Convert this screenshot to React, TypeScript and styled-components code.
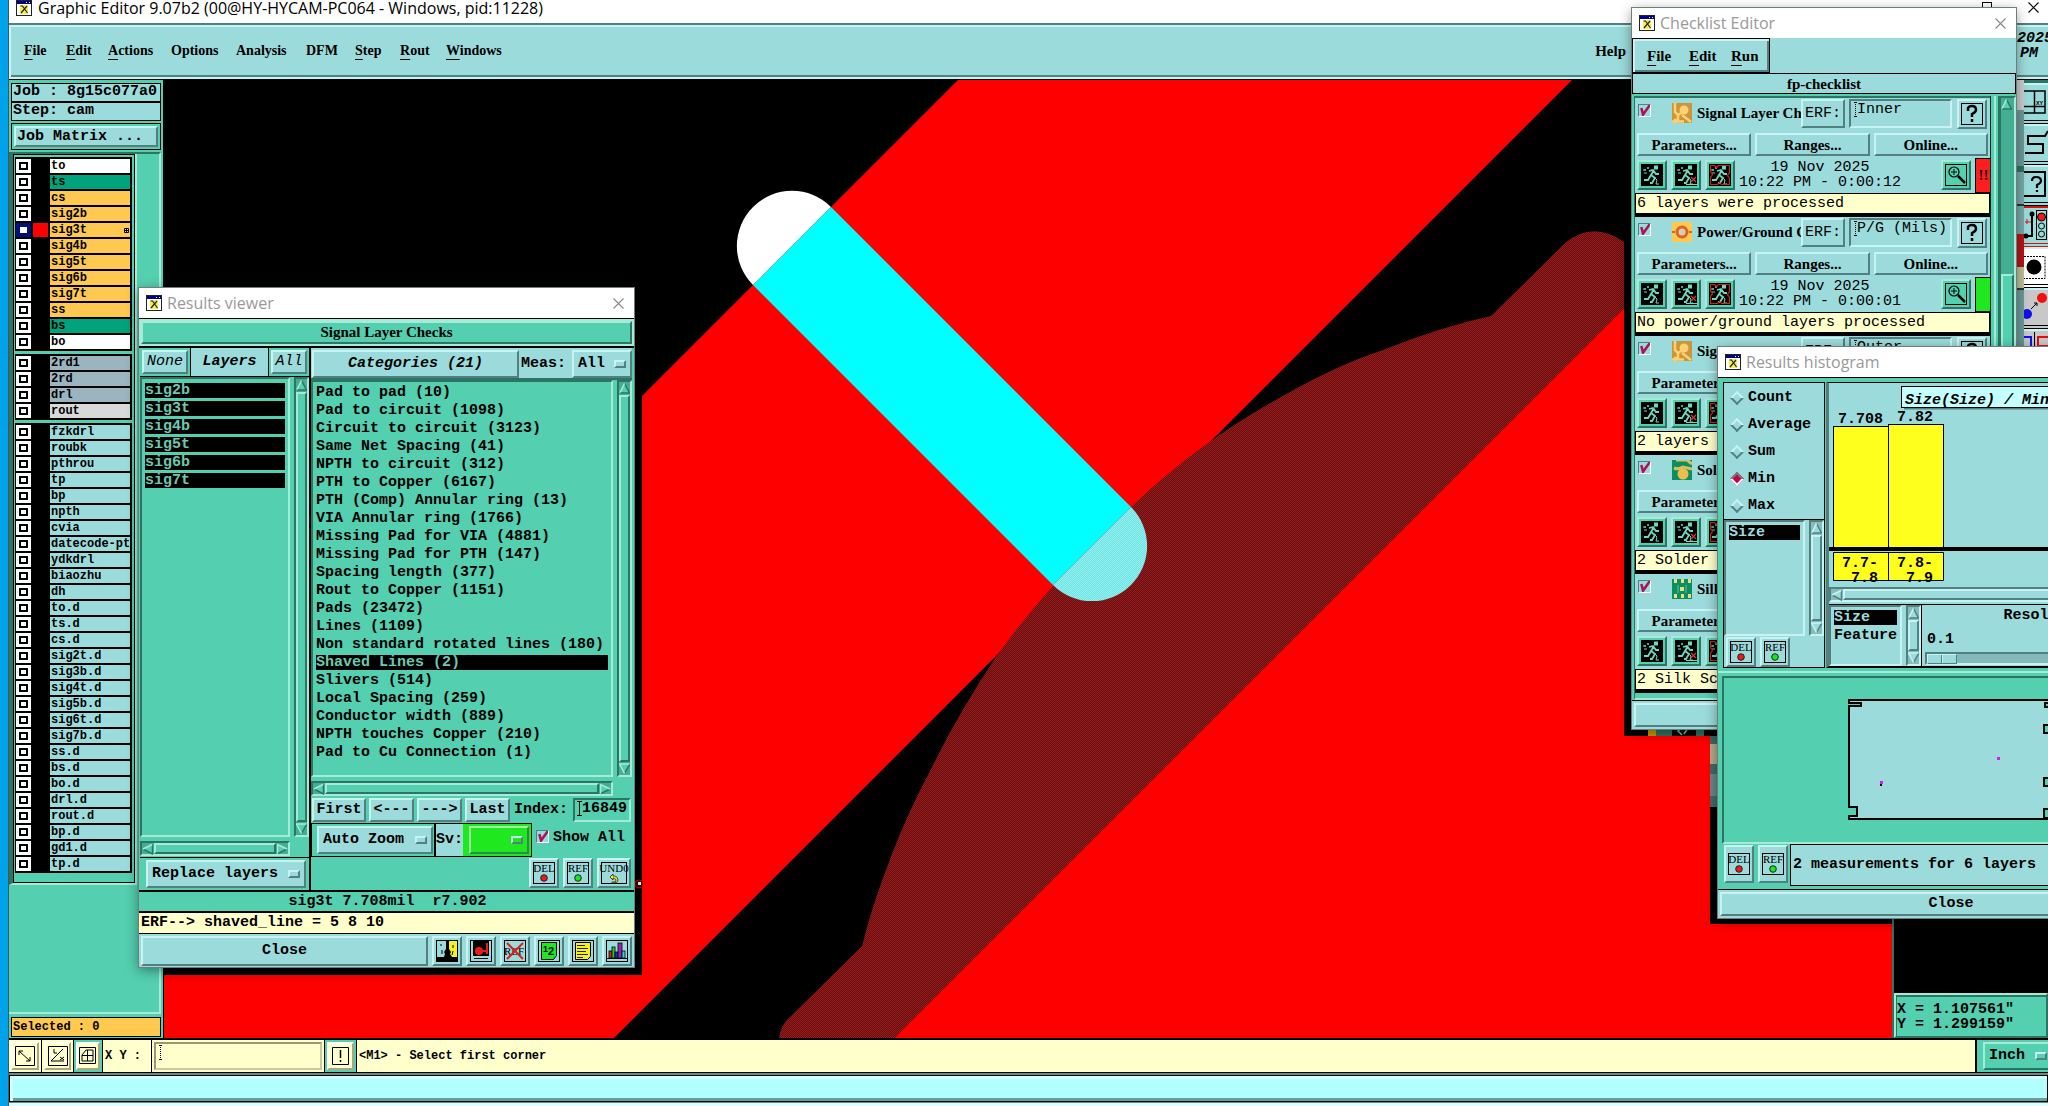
import React from "react";
import styled, { createGlobalStyle, css } from "styled-components";

const C = {
  blue: "#9cdbdb",
  blueHi: "#c8f3f3",
  blueLo: "#527f80",
  green: "#54cfb0",
  greenHi: "#a4ebd8",
  greenLo: "#2c7563",
  cream: "#ffffcc",
  ink: "#000000",
};

const mono = `"Liberation Mono", "DejaVu Sans Mono", monospace`;
const serif = `"Liberation Serif", "DejaVu Serif", serif`;
const ui = `"Open Sans", "Noto Sans", sans-serif`;

const Global = createGlobalStyle`
  *, *::before, *::after { box-sizing: border-box; }
  html, body, #root { height: 100%; }
  body { margin: 0; overflow: hidden; font: bold 15px/18px ${mono}; color: ${C.ink}; }
  button, input, select { font: inherit; color: inherit; margin: 0; padding: 0; border-radius: 0; }
  ul { list-style: none; margin: 0; padding: 0; }
  svg { display: block; flex: none; }
`;

const raisedBlue = css`
  border: 2px solid;
  border-color: ${C.blueHi} ${C.blueLo} ${C.blueLo} ${C.blueHi};
  background: ${C.blue};
`;
const raisedGreen = css`
  border: 2px solid;
  border-color: ${C.greenHi} ${C.greenLo} ${C.greenLo} ${C.greenHi};
  background: ${C.green};
`;
const sunkenGreen = css`
  border: 2px solid;
  border-color: ${C.greenLo} ${C.greenHi} ${C.greenHi} ${C.greenLo};
`;
const sunkenBlue = css`
  border: 2px solid;
  border-color: ${C.blueLo} ${C.blueHi} ${C.blueHi} ${C.blueLo};
`;
/* the I-shaped insertion mark at the start of a text field */
const caret = css`
  background-image: linear-gradient(#000, #000), linear-gradient(#000, #000), linear-gradient(#000, #000);
  background-repeat: no-repeat;
  background-position: 4px 1px, 2px 1px, 2px 15px;
  background-size: 1px 15px, 5px 1px, 5px 1px;
`;
const dottedCaret = css`
  background-image: repeating-linear-gradient(#000 0 1px, transparent 1px 2px), linear-gradient(90deg, #000 0 1px, transparent 1px 2px, #000 2px 3px), linear-gradient(90deg, #000 0 1px, transparent 1px 2px, #000 2px 3px);
  background-repeat: no-repeat;
  background-position: 4px 1px, 3px 1px, 3px 15px;
  background-size: 1px 15px, 3px 1px, 3px 1px;
`;

/* ---------- shared parts ---------- */

const Desktop = styled.div`
  position: relative;
  height: 100%;
  overflow: hidden;
  padding-left: 8px;
  background: #00a2ea;
`;

const Btn = styled.button<{ $w?: number; $italic?: boolean; $thin?: boolean; $grow?: boolean }>`
  ${raisedBlue}
  display: flex;
  align-items: center;
  justify-content: center;
  white-space: nowrap;
  overflow: hidden;
  ${(p) => (p.$grow ? "flex: 1;" : "flex: none;")}
  ${(p) => p.$w && `width: ${p.$w}px;`}
  font-style: ${(p) => (p.$italic ? "italic" : "normal")};
  font-weight: ${(p) => (p.$thin ? "normal" : "bold")};
`;

const SelectBox = styled.div<{ $tone?: "blue" | "green" | "lime"; $w: number }>`
  position: relative;
  flex: none;
  width: ${(p) => p.$w}px;
  height: 28px;
  select {
    appearance: none;
    width: 100%;
    height: 100%;
    padding-left: 4px;
    outline: none;
    ${(p) => (p.$tone === "green" ? raisedGreen : raisedBlue)}
    ${(p) => p.$tone === "lime" && "background: #1fe81f; border-color: #a4f5a4 #2a8a50 #2a8a50 #a4f5a4;"}
  }
  &::after {
    content: "";
    position: absolute;
    right: 6px;
    top: 10px;
    width: 12px;
    height: 8px;
    border: 2px solid;
    border-color: ${C.blueHi} ${C.blueLo} ${C.blueLo} ${C.blueHi};
    pointer-events: none;
  }
`;

function Option(p: { label: string; value: string; w: number; tone?: "blue" | "green" | "lime" }) {
  return (
    <SelectBox $w={p.w} $tone={p.tone}>
      <select aria-label={p.label} defaultValue={p.value}>
        <option value={p.value}>{p.value}</option>
      </select>
    </SelectBox>
  );
}

const Bar = styled.div<{ $h?: boolean; $tone: string }>`
  display: flex;
  flex-direction: ${(p) => (p.$h ? "row" : "column")};
  ${(p) => (p.$h ? "height: 15px; width: 100%;" : "width: 15px;")}
  flex: none;
  gap: 1px;
  ${(p) => (p.$tone === "blue" ? sunkenBlue : sunkenGreen)}
  background: ${(p) => (p.$tone === "blue" ? "#86bcbc" : "#45ad93")};
`;
const Thumb = styled.div<{ $tone: string }>`
  flex: 1;
  ${(p) => (p.$tone === "blue" ? raisedBlue : raisedGreen)}
`;

function Arrow({ dir, tone }: { dir: "up" | "down" | "left" | "right"; tone: string }) {
  const pts = { up: "5.5,0 11,11 0,11", down: "0,0 11,0 5.5,11", left: "0,5.5 11,0 11,11", right: "0,0 11,5.5 0,11" }[dir];
  const face = tone === "blue" ? C.blue : C.green;
  const hi = tone === "blue" ? C.blueHi : C.greenHi;
  const lo = tone === "blue" ? C.blueLo : C.greenLo;
  const edge = {
    up: ["M5.5,1 L1,10", "M1,10.5 H10.5 L5.5,1"],
    down: ["M10,.5 H.5 L5.5,10", "M5.5,10 L10.5,1"],
    left: ["M1,5.5 L10,1", "M10.5,1 V10.5 L1,5.5"],
    right: ["M.5,10 V1 L10,5.5", "M1,10 L10,5.5"],
  }[dir];
  return (
    <svg width="11" height="12" viewBox="0 0 11 11" aria-hidden="true">
      <polygon points={pts} fill={face} />
      <path d={edge[1]} stroke={lo} strokeWidth="1.5" fill="none" />
      <path d={edge[0]} stroke={hi} strokeWidth="1.5" fill="none" />
    </svg>
  );
}

function Scroll({ h, tone = "green" }: { h?: boolean; tone?: string }) {
  return (
    <Bar $h={h} $tone={tone}>
      <Arrow dir={h ? "left" : "up"} tone={tone} />
      <Thumb $tone={tone} />
      <Arrow dir={h ? "right" : "down"} tone={tone} />
    </Bar>
  );
}

const AppIcon = () => (
  <svg width="16" height="16" viewBox="0 0 16 16" aria-hidden="true">
    <rect x=".5" y=".5" width="15" height="15" fill="#fff" stroke="#222" />
    <rect x="1" y="1" width="14" height="3" fill="#000088" />
    <path d="M10 2.5h1M13 2.5h1" stroke="#fff" />
    <rect x="4" y="5" width="8" height="9" fill="#f7f04a" />
    <path d="M4.5 6h2l5 7M11 6l-6 7" stroke="#222" strokeWidth="1.2" fill="none" />
  </svg>
);

const CloseX = ({ c }: { c: string }) => (
  <svg width="11" height="11" viewBox="0 0 11 11" aria-hidden="true">
    <path d="M.5 .5l10 10M10.5 .5l-10 10" stroke={c} strokeWidth="1.1" />
  </svg>
);

const Win = styled.section<{ $x: number; $y: number; $w: number }>`
  position: absolute;
  left: ${(p) => p.$x}px;
  top: ${(p) => p.$y}px;
  width: ${(p) => p.$w}px;
  display: flex;
  flex-direction: column;
  background: ${C.green};
  outline: 1px solid #6d7f7c;
  box-shadow: 0 3px 12px rgba(0, 0, 0, 0.45);
`;
const WinTitle = styled.header`
  height: 30px;
  flex: none;
  display: flex;
  align-items: center;
  gap: 5px;
  padding: 0 8px 0 7px;
  background: #fff;
  font: 16px/20px ${ui};
  color: #999;
  button {
    margin-left: auto;
    border: 0;
    background: none;
    padding: 2px;
  }
`;
function Titled({ title }: { title: string }) {
  return (
    <WinTitle>
      <AppIcon />
      <span>{title}</span>
      <button aria-label="Close window"><CloseX c="#888" /></button>
    </WinTitle>
  );
}

/* small square picture buttons */
const Pic = styled.button<{ $green?: boolean; $tall?: boolean; $w?: number }>`
  ${(p) => (p.$green ? raisedGreen : raisedBlue)}
  flex: none;
  width: ${(p) => p.$w ?? 30}px;
  height: ${(p) => (p.$tall ? 38 : 30)}px;
  display: flex;
  align-items: center;
  justify-content: center;
`;
const Tag = styled.span<{ $w?: number }>`
  width: ${(p) => p.$w ?? 22}px;
  height: 22px;
  border: 1px solid #000;
  display: flex;
  flex-direction: column;
  align-items: center;
  font: 11px/11px ${serif};
`;
const Dot = ({ c }: { c: string }) => (
  <svg width="8" height="8" viewBox="0 0 8 8"><circle cx="4" cy="4" r="3.3" fill={c} stroke="#222" /></svg>
);
const Del = ({ tall }: { tall?: boolean }) => <Pic $tall={tall}><Tag>DEL<Dot c="#f01818" /></Tag></Pic>;
const Ref = ({ tall }: { tall?: boolean }) => <Pic $tall={tall}><Tag>REF<Dot c="#18e818" /></Tag></Pic>;

const Check = styled.input`
  appearance: none;
  flex: none;
  position: relative;
  width: 13px;
  height: 13px;
  border: 1px solid;
  border-color: ${C.blueLo} #fff #fff ${C.blueLo};
  background: ${C.blue};
  &:checked::before {
    content: "";
    position: absolute;
    inset: 0;
    background: #b0105a;
    clip-path: polygon(10% 30%, 32% 25%, 42% 58%, 85% 0, 100% 0, 100% 18%, 42% 100%, 28% 100%);
  }
`;

/* ---------- main window ---------- */

const Main = styled.main`
  height: 100%;
  display: flex;
  flex-direction: column;
  background: ${C.green};
  border-left: 1px solid #456;
`;
const MainTitle = styled.header`
  flex: none;
  height: 23px;
  padding: 0 0 8px 7px;
  display: flex;
  align-items: center;
  gap: 6px;
  background: #fff;
  font: 16px/16px ${ui};
  white-space: nowrap;
`;
const WinControls = styled.div`
  margin: 0 -8px 0 auto;
  display: flex;
  button {
    width: 46px;
    height: 15px;
    border: 0;
    background: none;
    display: grid;
    place-items: center;
  }
`;
const MenuBar = styled.nav`
  flex: none;
  height: 57px;
  display: flex;
  align-items: center;
  padding: 0 0 2px 9px;
  border-top: 2px solid ${C.blueLo};
  border-bottom: 1px solid #000;
  background: ${C.blue};
  box-shadow: inset 2px 2px ${C.blueHi}, inset 0 -2px ${C.blueHi}, inset 0 -4px ${C.blueLo};
`;
const MenuItem = styled.button<{ $w?: number; $big?: boolean }>`
  flex: none;
  ${(p) => p.$w && `width: ${p.$w}px;`}
  padding: 0 0 0 6px;
  border: 0;
  background: none;
  text-align: left;
  white-space: nowrap;
  font: bold ${(p) => (p.$big ? 15 : 14)}px/20px ${serif};
  u { text-underline-offset: 4px; }
`;
const HelpSlot = styled.div`margin: 0 391px 0 auto;`;
const DateSlot = styled.div`
  flex: none;
  width: 31px;
  overflow: hidden;
  font: italic bold 15px/15px ${mono};
  height: 40px;
  div:last-child { padding-left: 3px; }
`;
const Body = styled.div`
  flex: 1;
  min-height: 0;
  display: flex;
`;
const Side = styled.aside`
  flex: none;
  width: 155px;
  display: flex;
  flex-direction: column;
  padding: 3px 2px 1px;
  border-right: 1px solid #000;
`;
const Info = styled.div<{ $amber?: boolean }>`
  flex: none;
  height: ${(p) => (p.$amber ? 20 : 19)}px;
  border: 1px solid #000;
  background: ${(p) => (p.$amber ? "#ffc84e" : C.blue)};
  font-size: ${(p) => (p.$amber ? 12 : 15)}px;
  line-height: ${(p) => (p.$amber ? 18 : 16)}px;
  padding-left: 1px;
  white-space: nowrap;
`;
const MatrixFrame = styled.div`
  flex: none;
  margin-top: 2px;
  height: 27px;
  border: 1px solid #000;
  padding: 2px;
  display: flex;
`;
const MatrixBtn = styled(Btn)`
  justify-content: flex-start;
  padding-left: 1px;
`;
const LayerPane = styled.div`
  flex: 1;
  min-height: 0;
  margin: 2px 0 3px -2px;
  border-top: 2px solid ${C.greenLo};
  border-right: 2px solid ${C.greenHi};
  border-bottom: 2px solid ${C.greenHi};
`;
const LayerFrame = styled.div`
  width: 128px;
  border-left: 4px solid ${C.greenLo};
  border-right: 2px solid ${C.greenHi};
  border-bottom: 2px solid ${C.greenHi};
`;
const LayerInner = styled.div`
  border: 1px solid #000;
  padding: 2px 2px 9px 1px;
  display: flex;
  flex-direction: column;
  gap: 3px;
`;
const LayerGroup = styled.ul`
  background: #000;
  padding: 1px 0;
`;
const LayerRow = styled.li<{ $bg: string; $on?: boolean }>`
  height: 16px;
  display: flex;
  align-items: center;
  gap: 2px;
  padding: 0 2px 0 1px;
  label {
    flex: 1;
    min-width: 0;
    height: 14px;
    padding: 0 1px;
    display: flex;
    align-items: center;
    justify-content: space-between;
    overflow: hidden;
    white-space: nowrap;
    background: ${(p) => p.$bg};
    font-size: 12px;
    line-height: 14px;
  }
  input {
    appearance: none;
    flex: none;
    width: 15px;
    height: 14px;
    background: #fff;
    border: ${(p) => (p.$on ? "4px solid #00107a" : "2px solid #fff")};
    outline: ${(p) => (p.$on ? "0" : "2px solid #000")};
    outline-offset: -5px;
  }
  i {
    flex: none;
    width: 15px;
    height: 14px;
    background: ${(p) => (p.$on ? "#f00" : "#000")};
  }
`;

const W = "#ffffff", T = "#00a37c", O = "#ffc850", S = "#9ab4c0", G = "#d9d9d9", B = C.blue;
const groups: [string, string][][] = [
  [["to", W], ["ts", T], ["cs", O], ["sig2b", O], ["sig3t", O], ["sig4b", O], ["sig5t", O], ["sig6b", O], ["sig7t", O], ["ss", O], ["bs", T], ["bo", W]],
  [["2rd1", S], ["2rd", S], ["drl", S], ["rout", G]],
  ["fzkdrl", "roubk", "pthrou", "tp", "bp", "npth", "cvia", "datecode-pto", "ydkdrl", "biaozhu", "dh", "to.d", "ts.d", "cs.d", "sig2t.d", "sig3b.d", "sig4t.d", "sig5b.d", "sig6t.d", "sig7b.d", "ss.d", "bs.d", "bo.d", "drl.d", "rout.d", "bp.d", "gd1.d", "tp.d"].map((n) => [n, B] as [string, string]),
];

const Stage = styled.div`
  flex: 1;
  min-width: 0;
  background: #000;
  overflow: hidden;
  svg { width: 100%; height: 100%; }
`;
function Board() {
  return (
    <Stage>
      <svg viewBox="164 80 1728 958" preserveAspectRatio="xMinYMin slice">
        <defs>
          <pattern id="mesh" width="2" height="2" patternUnits="userSpaceOnUse">
            <rect width="2" height="2" fill="#561414" />
            <rect width="1" height="1" fill="#a61616" />
            <rect x="1" y="1" width="1" height="1" fill="#a61616" />
          </pattern>
          <pattern id="pale" width="2" height="2" patternUnits="userSpaceOnUse">
            <rect width="2" height="2" fill="#66e6e6" />
            <rect width="1" height="1" fill="#9cecec" />
            <rect x="1" y="1" width="1" height="1" fill="#9cecec" />
          </pattern>
        </defs>
        <rect x="164" y="80" width="1728" height="958" fill="#000" />
        <polygon points="958,80 1572,80 614,1038 164,1038 164,874" fill="#f00" />
        <polygon points="1892,40 1892,1038 894,1038" fill="#f00" />
        <path d="M779 1038 Q781 1025 788 1019 L862 946 Q872 905 892 854 Q908 812 932 767 Q960 710 998 654 Q1024 618 1053 586 L1131 507 Q1162 477 1197 451 Q1240 419 1290 392 Q1340 364 1383 350 Q1440 327 1491 316 L1565 243 Q1593 220 1624 242 V308 L894 1038 Z" fill="url(#mesh)" />
        <path d="M753 285 A55 55 0 0 1 831 207 Z" fill="#fff" />
        <polygon points="753,285 831,207 1131,507 1053,585" fill="#0ff" />
        <path d="M1131 507 A55 55 0 0 1 1053 585 Z" fill="url(#pale)" />
        <rect x="164" y="280" width="478" height="695" fill="#000" />
        <circle cx="639" cy="884" r="4" fill="#300" stroke="#c00" />
        <rect x="638" y="882" width="3" height="3" fill="#dff" />
        <rect x="1624" y="80" width="270" height="656" fill="#000" />
        <rect x="1648" y="728" width="8" height="8" fill="#c49a00" />
        <rect x="1656" y="728" width="54" height="8" fill="#2c7563" />
        <path d="M1672 728h24v8h-24zM1704 728h6v8h-6z" fill="#000" />
        <path d="M1682 728l-4 3 4 4M1688 728l-4 6" stroke={C.green} strokeWidth="1.5" fill="none" />
        <rect x="1710" y="736" width="182" height="188" fill="#000" />
        <rect x="1710" y="736" width="8" height="71" fill="#3f6f68" />
        <rect x="1710" y="744" width="8" height="20" fill="#b5ab85" />
        <rect x="1710" y="774" width="8" height="22" fill="#6b8788" />
      </svg>
    </Stage>
  );
}
const RightPane = styled.aside`
  flex: none;
  width: 156px;
  display: flex;
  flex-direction: column;
  border-left: 2px solid ${C.greenLo};
`;
const ToolArea = styled.div`
  flex: 1;
  min-height: 0;
  display: flex;
  justify-content: flex-end;
  background: #000;
`;
const Sliver = styled.div`
  width: 8px;
  height: 270px;
  background: linear-gradient(#ccc 0 30px, #6c9a9a 30px 86px, #2c7563 86px 92px, #7aa 92px 124px, #333 124px 126px, #7aa 126px 154px, #b51515 154px 187px, #c0c09a 187px 208px, #333 208px 210px, #6c9a9a 210px);
`;
const Tools = styled.div`
  width: 24px;
  height: 270px;
  overflow: hidden;
  display: flex;
  flex-direction: column;
  border-top: 3px solid ${C.greenLo};
`;
const Tool = styled.button<{ $bg: string; $edge?: string }>`
  flex: none;
  width: 40px;
  height: 41px;
  border: 0;
  border-top: 2px solid ${(p) => p.$edge ?? C.blueHi};
  border-bottom: 4px double ${(p) => p.$edge ?? "#000"};
  background: ${(p) => p.$bg};
`;
const Coords = styled.div`
  flex: none;
  height: 45px;
  padding: 7px 0 0 1px;
  ${raisedGreen}
  box-shadow: inset 1px 2px ${C.greenLo};
  font-size: 15px;
  line-height: 15px;
  white-space: pre;
`;
const Command = styled.footer`
  flex: none;
  height: 35px;
  border-top: 2px solid #000;
  border-bottom: 1px solid #000;
  display: flex;
  background: ${C.cream};
  font-size: 12px;
`;
const CmdCell = styled.div<{ $w: number; $green?: boolean }>`
  flex: none;
  width: ${(p) => p.$w}px;
  padding: 2px;
  display: flex;
  align-items: center;
  border-right: 1px solid #000;
  background: ${(p) => (p.$green ? C.green : C.cream)};
  white-space: pre;
`;
const CmdBtn = styled.button`
  width: 100%;
  height: 28px;
  display: grid;
  place-items: center;
  background: ${C.cream};
  border: 2px solid;
  border-color: #fffff0 #aaa684 #aaa684 #fffff0;
`;
const CmdInput = styled.input`
  width: 100%;
  height: 28px;
  background-color: ${C.cream};
  border: 2px solid;
  border-color: #9a9678 #ccc8a0 #ccc8a0 #9a9678;
  outline: none;
  ${dottedCaret}
`;
const CmdText = styled.div`
  flex: 1;
  padding: 7px 0 0 2px;
  border-right: 2px solid #000;
`;
const UnitCell = styled.div`
  flex: none;
  width: 71px;
  overflow: hidden;
  padding: 2px 0 0 6px;
  background: ${C.green};
  font-size: 15px;
`;
const Strip = styled.div`
  flex: none;
  height: 33px;
  padding-top: 2px;
  background: #5f8f8c;
  border-bottom: 3px solid #dff;
  div {
    height: 27px;
    background: #b2ffff;
    border: 1px solid #000;
    box-shadow: inset 3px 3px #d4ffff, inset 0 -3px #66a09e;
  }
`;

/* ---------- results viewer ---------- */

const Head = styled.div`
  flex: none;
  height: 30px;
  border-top: 1px solid #000;
  border-bottom: 2px solid #000;
  padding: 2px;
  background: ${C.greenHi};
  display: flex;
  div {
    flex: 1;
    ${raisedGreen}
    text-align: center;
    font: bold 15px/18px ${serif};
  }
`;
const Split = styled.div`
  display: flex;
  height: 544px;
  border-bottom: 2px solid #000;
`;
const ColL = styled.div`
  flex: none;
  width: 172px;
  display: flex;
  flex-direction: column;
  padding-left: 1px;
  border-right: 2px solid #000;
`;
const ColR = styled.div`
  flex: 1;
  min-width: 0;
  display: flex;
  flex-direction: column;
  padding: 0 2px 0 0;
`;
const HeadRow = styled.div`
  flex: none;
  height: 29px;
  display: flex;
  border-bottom: 1px solid #000;
`;
const HeadCell = styled.div<{ $w?: number; $plain?: boolean }>`
  ${(p) => (p.$w ? `flex: none; width: ${p.$w}px;` : "flex: 1;")}
  display: flex;
  align-items: center;
  justify-content: center;
  padding: 2px;
  font-style: italic;
  background: ${(p) => (p.$plain ? C.blue : C.green)};
  & + & { border-left: 1px solid #000; }
  button { height: 100%; }
`;
const CatHead = styled.div`
  flex: none;
  height: 32px;
  display: flex;
  align-items: center;
  padding: 1px 1px 0;
  background: ${C.blue};
  border-bottom: 2px solid ${C.greenLo};
  > button { height: 28px; margin-right: 2px; }
  label { margin-right: 6px; }
`;
const ListArea = styled.div`
  flex: 1;
  min-height: 0;
  display: flex;
  gap: 4px;
`;
const List = styled.ul<{ $blue?: boolean; $pad?: number }>`
  flex: 1;
  min-width: 0;
  overflow: hidden;
  padding: ${(p) => p.$pad ?? 2}px 3px;
  ${(p) => (p.$blue ? sunkenBlue : sunkenGreen)}
`;
const Item = styled.li<{ $sel?: boolean; $blue?: boolean }>`
  height: 15px;
  margin-bottom: 3px;
  line-height: 15px;
  white-space: nowrap;
  ${(p) => p.$sel && `background: #000; color: ${p.$blue ? C.blue : "#6fc7b0"};`}
`;
const HScrollRow = styled.div`
  flex: none;
  padding: 4px 19px 0 0;
`;
const ReplaceRow = styled.div`
  flex: none;
  height: 33px;
  margin-top: 1px;
  padding: 2px 2px 0 6px;
  border-top: 1px solid #000;
`;
const Nav = styled.div`
  flex: none;
  height: 27px;
  display: flex;
  align-items: center;
  padding: 1px 1px 0;
  button { height: 24px; margin-right: 3px; }
  label { margin: 0 5px 0 1px; }
`;
const IndexInput = styled.input`
  flex: 1;
  min-width: 0;
  height: 24px;
  padding: 0 0 4px 7px;
  outline: none;
  ${sunkenGreen}
  background-color: ${C.green};
  ${caret}
`;
const ZoomRow = styled.div`
  flex: none;
  height: 34px;
  display: flex;
  gap: 4px;
  label { display: flex; gap: 4px; padding-top: 6px; align-items: flex-start; }
  input { margin-top: 1px; }
`;
const ZoomBox = styled.div`
  width: 221px;
  flex: none;
  border: 1px solid #000;
  display: flex;
  align-items: center;
  padding-left: 5px;
`;
const SvLabel = styled.span`
  height: 100%;
  width: 29px;
  margin-left: 1px;
  border-left: 2px solid #000;
  background: ${C.blue};
  line-height: 32px;
`;
const SvCell = styled.div`
  flex: 1;
  height: 100%;
  padding: 2px 2px 0 6px;
  background: #1fe81f;
`;
const IconRow = styled.div`
  flex: none;
  height: 33px;
  display: flex;
  justify-content: flex-end;
  gap: 4px;
  padding: 1px 1px 0;
`;
const Status = styled.div<{ $cream?: boolean }>`
  flex: none;
  height: 21px;
  line-height: 20px;
  white-space: pre;
  border-bottom: ${(p) => (p.$cream ? 1 : 2)}px solid #000;
  padding-left: 2px;
  text-align: ${(p) => (p.$cream ? "left" : "center")};
  background: ${(p) => (p.$cream ? C.cream : C.green)};
`;
const Foot = styled.div`
  flex: none;
  height: 33px;
  display: flex;
  align-items: center;
  gap: 4px;
  padding: 0 2px;
  background: ${C.blue};
  > button:first-child { height: 30px; }
`;

const categories = [
  "Pad to pad (10)", "Pad to circuit (1098)", "Circuit to circuit (3123)", "Same Net Spacing (41)",
  "NPTH to circuit (312)", "PTH to Copper (6167)", "PTH (Comp) Annular ring (13)", "VIA Annular ring (1766)",
  "Missing Pad for VIA (4881)", "Missing Pad for PTH (147)", "Spacing length (377)", "Rout to Copper (1151)",
  "Pads (23472)", "Lines (1109)", "Non standard rotated lines (180)", "Shaved Lines (2)", "Slivers (514)",
  "Local Spacing (259)", "Conductor width (889)", "NPTH touches Copper (210)", "Pad to Cu Connection (1)",
];

function ResultsViewer() {
  return (
    <Win $x={139} $y={288} $w={495}>
      <Titled title="Results viewer" />
      <Head><div>Signal Layer Checks</div></Head>
      <Split>
        <ColL>
          <HeadRow>
            <HeadCell $w={50}><Btn $grow $italic $thin>None</Btn></HeadCell>
            <HeadCell $plain>Layers</HeadCell>
            <HeadCell $w={41}><Btn $grow $italic $thin>All</Btn></HeadCell>
          </HeadRow>
          <ListArea>
            <List role="listbox" $pad={4}>
              {["sig2b", "sig3t", "sig4b", "sig5t", "sig6b", "sig7t"].map((s) => <Item $sel key={s} role="option">{s}</Item>)}
            </List>
            <Scroll />
          </ListArea>
          <HScrollRow><Scroll h /></HScrollRow>
          <ReplaceRow><Option label="Layer mode" value="Replace layers" w={160} /></ReplaceRow>
        </ColL>
        <ColR>
          <CatHead>
            <Btn $w={207} $italic>Categories (21)</Btn>
            <label>Meas:</label>
            <Option label="Measurements" value="All" w={60} />
          </CatHead>
          <ListArea>
            <List role="listbox" $pad={3}>
              {categories.map((c) => <Item key={c} role="option" $sel={c.startsWith("Shaved")}>{c}</Item>)}
            </List>
            <Scroll />
          </ListArea>
          <HScrollRow><Scroll h /></HScrollRow>
          <Nav>
            <Btn $w={54}>First</Btn>
            <Btn $w={45}>&lt;---</Btn>
            <Btn $w={45}>---&gt;</Btn>
            <Btn $w={45}>Last</Btn>
            <label htmlFor="idx">Index:</label>
            <IndexInput id="idx" defaultValue="16849" />
          </Nav>
          <ZoomRow>
            <ZoomBox>
              <Option label="Zoom mode" value="Auto Zoom" w={116} />
              <SvLabel>Sv:</SvLabel>
              <SvCell><Option label="Severity" value=" " w={60} tone="lime" /></SvCell>
            </ZoomBox>
            <label><Check type="checkbox" defaultChecked />Show All</label>
          </ZoomRow>
          <IconRow>
            <Del />
            <Ref />
            <Pic $w={34}>
              <Tag $w={26}>
                <span>UND0</span>
                <svg width="10" height="10" viewBox="0 0 10 10"><path d="M1 3l3-3v2h2q3 1 3 4t-4 3H3V8h3q1-1 1-2T5 4H4v2z" fill="#f5ec30" stroke="#222" strokeWidth=".8" /></svg>
              </Tag>
            </Pic>
          </IconRow>
        </ColR>
      </Split>
      <Status>{"sig3t 7.708mil  r7.902"}</Status>
      <Status $cream>{"ERF--> shaved_line = 5 8 10"}</Status>
      <Foot>
        <Btn $grow>Close</Btn>
        <Pic aria-label="Split view">
          <svg width="22" height="22" viewBox="0 0 22 22"><rect x=".5" y=".5" width="21" height="21" fill={C.blue} stroke="#000" /><path d="M13 1h8v16h-8z" fill="#f7f01c" /><path d="M10 1h3v8l2 3-1 2 2 3h5v4H1v-4h7l1-3-1-2 2-3z" /><path d="M5 4v2M6 10v4M17 5v3M17 11l-1 4" stroke="#000" /></svg>
        </Pic>
        <Pic aria-label="Snapshot">
          <svg width="22" height="22" viewBox="0 0 22 22"><rect x=".5" y=".5" width="21" height="21" fill={C.blue} stroke="#000" /><path d="M3 1h16v15H3z" /><circle cx="9" cy="11" r="4" fill="#f01818" /><path d="M13 11h4M17 3v11" stroke="#f01818" strokeWidth="2" /><path d="M4 18.500h14" stroke="#000" /></svg>
        </Pic>
        <Pic aria-label="Clear reference">
          <svg width="22" height="22" viewBox="0 0 22 22"><rect x=".5" y=".5" width="21" height="21" fill="none" stroke="#000" /><text x="0" y="15" fontFamily="Liberation Serif, serif" fontSize="11" fontWeight="normal">REF</text><path d="M3 3l16 16M19 3L3 19" stroke="#d82020" strokeWidth="2" /></svg>
        </Pic>
        <Pic aria-label="Half page">
          <svg width="22" height="22" viewBox="0 0 22 22"><rect x=".5" y=".5" width="21" height="21" fill="none" stroke="#000" /><path d="M3.500 2.500h15v13l-3 4h-12z" fill="#1fe81f" stroke="#000" /><text x="5" y="12" fontFamily="Liberation Sans, sans-serif" fontSize="9" fontWeight="bold">1</text><text x="10" y="15" fontFamily="Liberation Sans, sans-serif" fontSize="11" fontWeight="bold">2</text></svg>
        </Pic>
        <Pic aria-label="Report">
          <svg width="22" height="22" viewBox="0 0 22 22"><rect x=".5" y=".5" width="21" height="21" fill="none" stroke="#000" /><path d="M3.500 2.500h15v14l-3 3h-12z" fill="#f7f01c" stroke="#000" /><path d="M5 5.500h8M5 8.500h11M5 11.500h9M5 14.500h11M5 17.500h6" stroke="#222" /></svg>
        </Pic>
        <Pic aria-label="Histogram">
          <svg width="22" height="22" viewBox="0 0 22 22"><rect x=".5" y=".5" width="21" height="21" fill="none" stroke="#000" /><g stroke="#000" strokeWidth=".8"><rect x="3" y="11" width="3" height="7" fill="#e02020" /><rect x="6" y="7" width="3" height="11" fill="#1fd01f" /><rect x="9" y="12" width="3" height="6" fill="#2030d0" /><rect x="12" y="3" width="4" height="15" fill="#a020b0" /><rect x="16" y="11" width="3" height="7" fill="#20d8e8" /></g><path d="M1 18.500h20" stroke="#000" /></svg>
        </Pic>
      </Foot>
    </Win>
  );
}

/* ---------- checklist editor ---------- */

const ListMenu = styled.div`
  flex: none;
  height: 35px;
  background: ${C.blue};
  nav {
    width: 138px;
    height: 35px;
    display: flex;
    align-items: center;
    border: 1px solid #000;
    padding-left: 8px;
    background: ${C.blue};
    box-shadow: inset 2px 2px ${C.blueHi}, inset -2px -2px ${C.blueLo};
  }
`;
const ListName = styled.div`
  flex: none;
  height: 21px;
  border: 1px solid #000;
  background: ${C.blue};
  text-align: center;
  font: bold 15px/20px ${serif};
`;
const Sheet = styled.div`
  height: 606px;
  display: flex;
  padding: 2px 0 0 2px;
`;
const Rows = styled.div`
  flex: 1;
  min-width: 0;
  overflow: hidden;
  border: solid ${C.greenLo};
  border-width: 2px 0 0 1px;
  border-bottom: 2px solid ${C.greenHi};
`;
const Gutter = styled.div`
  flex: none;
  width: 8px;
  background: linear-gradient(90deg, #222 0 1px, ${C.green} 1px 4px, ${C.greenHi} 4px 6px, ${C.green} 6px);
`;
const Trough = styled.div`
  flex: none;
  width: 18px;
  display: flex;
  flex-direction: column;
  background: #45ad93;
  ${sunkenGreen}
  border-left-width: 3px;
`;
const Entry = styled.article`
  height: 119px;
  background: ${C.blue};
  display: flex;
  flex-direction: column;
  border-bottom: 3px solid #000;
`;
const Row1 = styled.div`
  flex: none;
  height: 31px;
  display: flex;
  align-items: flex-start;
  padding: 1px 3px 0 3px;
  > input:first-child { margin: 5px 21px 0 0; }
  > svg { margin: 4px 5px 0 0; }
`;
const Name = styled.h3`
  margin: 0;
  width: 104px;
  flex: none;
  overflow: hidden;
  white-space: nowrap;
  font: bold 15px/29px ${serif};
`;
const ErfBtn = styled(Btn)`
  width: 44px;
  height: 29px;
  margin-right: 4px;
`;
const ErfInput = styled.input`
  flex: 1;
  min-width: 0;
  height: 29px;
  margin-right: 5px;
  padding: 0 0 9px 6px;
  font-weight: normal;
  outline: none;
  ${sunkenBlue}
  background-color: ${C.blue};
  ${dottedCaret}
`;
const Row2 = styled.div`
  flex: none;
  height: 27px;
  display: grid;
  grid-template-columns: 1fr 1fr 1fr;
  gap: 4px;
  padding: 4px 2px 0;
  button { font: bold 15px/18px ${serif}; height: 23px; }
`;
const Row3 = styled.div`
  flex: none;
  height: 37px;
  display: flex;
  align-items: center;
  gap: 4px;
  padding: 1px 0 0 2px;
`;
const When = styled.div`
  flex: 1;
  font-weight: normal;
  line-height: 15px;
  white-space: nowrap;
  text-align: center;
  display: flex;
  flex-direction: column;
  padding: 0 36px 0 0;
  span:last-child { text-align: left; }
`;
const Flag = styled.span<{ $c: string }>`
  flex: none;
  width: 17px;
  height: 35px;
  border: 1px solid #000;
  background: ${(p) => p.$c};
  text-align: center;
  font: bold 15px/32px ${serif};
`;
const Note = styled.div`
  flex: 1;
  border: 1px solid #000;
  background: ${C.cream};
  font-weight: normal;
  line-height: 19px;
  padding-left: 1px;
  white-space: nowrap;
`;

function Runner({ kind }: { kind: number }) {
  return (
    <Pic $green>
      <svg width="22" height="22" viewBox="0 0 22 22">
        <rect width="22" height="22" />
        <rect x="13" y="1.500" width="4" height="4" fill="#6fd8bd" />
        <path d="M13 6l-3 5 4 3-3 5H9M10 11l-3 5H3M8 7l4-1 3 4h3M12 7l-2 5" stroke="#6fd8bd" strokeWidth="1.800" fill="none" />
        <path d="M2 6h3M6 4h2M3 9h3M4 5v2M7 3v2M14 14l2 2-1 4h3" stroke="#6fd8bd" strokeWidth="1" fill="none" />
        {kind === 1 && <path d="M16 13l5 5M21 13l-5 5" stroke="#e03030" strokeWidth="1.200" />}
        {kind === 1 && <path d="M11 20.500h11" stroke="#6fd8bd" />}
        {kind === 2 && <path d="M1.500 1.500h4l2 2 2-2h11v7l-2 3 2 3v6h-8l-2-2-2 2h-7v-7l2-3-2-3z" stroke="#d82020" strokeWidth="1.200" fill="none" />}
      </svg>
    </Pic>
  );
}
function CheckIcon({ kind }: { kind: number }) {
  return (
    <svg width="20" height="20" viewBox="0 0 20 20">
      {kind === 0 && <><rect width="20" height="20" fill="#c9963c" /><circle cx="12" cy="7" r="4.500" fill="#ffd070" /><path d="M3 0v9l3 3v5H3v3M10 12l9 7M6 12l5-3M0 18.500h12" stroke="#ffd070" strokeWidth="2.500" fill="none" /></>}
      {kind === 1 && <><rect width="20" height="20" fill="#ffc850" /><circle cx="10" cy="10" r="5" fill="#cfd0c0" stroke="#e0601c" strokeWidth="3" /><path d="M0 10h3M17 10h3" stroke="#e0601c" strokeWidth="2" /></>}
      {kind === 2 && <><rect width="20" height="20" fill="#0c8f60" /><circle cx="11" cy="14" r="5.500" fill="#f0bc50" /><path d="M4 0h11l5 4M2 8q5 2 9-1l9 2" stroke="#d8c060" strokeWidth="3" fill="none" /></>}
      {kind === 3 && <><rect width="20" height="20" fill="#0c8f60" /><path d="M2 2h3M9 2h3M16 2h3M2 17h3M9 17h3M16 17h3M8 10h4" stroke="#f0dc80" strokeWidth="4" /><path d="M6 6v8M14 6v8" stroke="#5fc79c" /></>}
    </svg>
  );
}
const entries = [
  { n: "Signal Layer Ch", erf: "Inner", t: "10:22 PM - 0:00:12", c: "#ff1e1e", f: "!!", note: "6 layers were processed", k: 0 },
  { n: "Power/Ground C", erf: "P/G (Mils)", t: "10:22 PM - 0:00:01", c: "#1fe81f", f: "", note: "No power/ground layers processed", k: 1 },
  { n: "Signal Layer Ch", erf: "Outer", t: "", c: "#1fe81f", f: "", note: "2 layers", k: 0 },
  { n: "Solder", erf: "", t: "", c: "#1fe81f", f: "", note: "2 Solder", k: 2 },
  { n: "Silk", erf: "", t: "", c: "#1fe81f", f: "", note: "2 Silk Sc", k: 3 },
];

function Checklist() {
  return (
    <Win $x={1632} $y={8} $w={384}>
      <Titled title="Checklist Editor" />
      <ListMenu>
        <nav>
          <MenuItem $big $w={42}><u>F</u>ile</MenuItem>
          <MenuItem $big $w={42}><u>E</u>dit</MenuItem>
          <MenuItem $big $w={42}><u>R</u>un</MenuItem>
        </nav>
      </ListMenu>
      <ListName>fp-checklist</ListName>
      <Sheet>
        <Rows>
          {entries.map((e, i) => (
            <Entry key={i}>
              <Row1>
                <Check type="checkbox" defaultChecked aria-label={e.n} />
                <CheckIcon kind={e.k} />
                <Name>{e.n}</Name>
                <ErfBtn $thin>ERF:</ErfBtn>
                <ErfInput aria-label="ERF" defaultValue={e.erf} />
                <Pic aria-label="Help">
                  <svg width="22" height="22" viewBox="0 0 22 22"><rect x=".5" y=".5" width="21" height="21" fill="none" stroke="#000" /><path d="M7 8V5q1-2 4-2 4 0 4 4 0 2-4 4v3M11 16v3" stroke="#000" strokeWidth="2.500" fill="none" /></svg>
                </Pic>
              </Row1>
              <Row2><Btn>Parameters...</Btn><Btn>Ranges...</Btn><Btn>Online...</Btn></Row2>
              <Row3>
                <Runner kind={0} /><Runner kind={1} /><Runner kind={2} />
                <When><span>{e.t && "19 Nov 2025"}</span><span>{e.t}</span></When>
                <Pic $green aria-label="View results">
                  <svg width="22" height="22" viewBox="0 0 22 22"><rect x=".5" y=".5" width="21" height="21" fill="none" stroke="#000" /><circle cx="9" cy="8" r="5" fill={C.green} stroke="#000" strokeWidth="1.200" /><path d="M6 8h6M9 5v6" stroke="#000" /><path d="M13 12l7 7" stroke="#000" strokeWidth="2.500" /></svg>
                </Pic>
                <Flag $c={e.c}>{e.f}</Flag>
              </Row3>
              <Note>{e.note}</Note>
            </Entry>
          ))}
        </Rows>
        <Gutter />
        <Trough>
          <Arrow dir="up" tone="green" />
          <TroughGap />
          <Thumb $tone="green" />
        </Trough>
      </Sheet>
      <CloseRow><Btn $grow /></CloseRow>
    </Win>
  );
}
const TroughGap = styled.div`flex: none; height: 164px;`;
const CloseRow = styled.div`
  flex: none;
  height: 29px;
  display: flex;
  padding: 2px;
  background: ${C.blue};
  border-top: 1px solid #000;
`;

/* ---------- histogram ---------- */

const HistTop = styled.div`
  height: 296px;
  flex: none;
  display: flex;
  border-top: 1px solid #000;
  padding: 4px 0 3px 5px;
  gap: 1px;
  border-bottom: 2px solid ${C.greenHi};
`;
const HistL = styled.div`
  flex: none;
  width: 102px;
  border: 1px solid #000;
  background: ${C.blue};
  display: flex;
  flex-direction: column;
`;
const Radios = styled.fieldset`
  margin: 0;
  padding: 1px 0 0 6px;
  border: 0;
  border-bottom: 1px solid #000;
  height: 137px;
  label {
    height: 27px;
    display: flex;
    align-items: center;
    gap: 6px;
  }
  input {
    appearance: none;
    width: 10px;
    height: 10px;
    margin: 0 0 0 2px;
    transform: rotate(45deg);
    border: 2px solid;
    border-color: ${C.blueHi} ${C.blueLo} ${C.blueLo} ${C.blueHi};
  }
  input:checked {
    background: #c8004c;
    border-color: #777 #fff #fff #777;
  }
`;
const HistList = styled.div`
  flex: none;
  height: 116px;
  display: flex;
  gap: 4px;
`;
const HistBtns = styled.div`
  display: flex;
  gap: 4px;
  padding: 1px 2px 0;
`;
const HistR = styled.div`
  flex: 1;
  min-width: 0;
  border-left: 3px solid ${C.blueLo};
  border-top: 1px solid #000;
  border-bottom: 2px solid #000;
  background: ${C.blue};
  display: flex;
  flex-direction: column;
`;
const Chart = styled.div`
  flex: 1;
  min-height: 0;
  padding-top: 1px;
`;
const ResRow = styled.div`
  flex: none;
  height: 62px;
  margin-top: 2px;
  display: flex;
  border-top: 1px solid #000;
`;
const ResList = styled.div`
  flex: none;
  width: 93px;
  display: flex;
  gap: 4px;
  border-right: 1px solid #000;
`;
const ResPane = styled.div`
  flex: 1;
  display: flex;
  flex-direction: column;
  padding-left: 3px;
  label { text-align: center; line-height: 22px; padding-right: 12px; }
  span { padding-left: 2px; line-height: 25px; }
`;
const Slider = styled.input`
  appearance: none;
  width: 100%;
  height: 13px;
  background: #84b9b9;
  ${sunkenBlue}
  background: #84b9b9;
  &::-webkit-slider-thumb {
    appearance: none;
    width: 30px;
    height: 10px;
    border: 1px solid;
    border-color: ${C.blueHi} ${C.blueLo} ${C.blueLo} ${C.blueHi};
    background: linear-gradient(90deg, ${C.blue} 0 13px, ${C.blueLo} 13px 14px, ${C.blueHi} 14px 15px, ${C.blue} 15px);
  }
`;
const BoardView = styled.div`
  flex: none;
  height: 168px;
  margin: 3px 0 0 4px;
  border: solid ${C.greenLo};
  border-width: 2px 0 0 2px;
  border-bottom: 2px solid ${C.greenHi};
`;
const Summary = styled.div`
  flex: none;
  height: 46px;
  display: flex;
  gap: 4px;
  padding: 0 0 2px 6px;
  border-bottom: 1px solid #000;
  > button { margin-top: 1px; }
  > div {
    flex: 1;
    height: 42px;
    border: 1px solid #000;
    background: ${C.blue};
    padding-left: 2px;
    line-height: 40px;
    margin-left: -2px;
  }
`;

function Histogram() {
  return (
    <Win $x={1718} $y={347} $w={466}>
      <Titled title="Results histogram" />
      <HistTop>
        <HistL>
          <Radios>
            {["Count", "Average", "Sum", "Min", "Max"].map((r) => (
              <label key={r}><input type="radio" name="stat" defaultChecked={r === "Min"} />{r}</label>
            ))}
          </Radios>
          <HistList>
            <List $blue role="listbox" $pad={3}><Item $sel $blue role="option">Size</Item></List>
            <Scroll tone="blue" />
          </HistList>
          <HistBtns><Del /><Ref /></HistBtns>
        </HistL>
        <HistR>
          <Chart>
            <svg width="360" height="203" viewBox="0 0 360 203" fontFamily="Liberation Mono, monospace" fontSize="15" fontWeight="bold">
              <path d="M75 23h270" stroke="#527f80" strokeWidth="5" />
              <rect x="72.500" y="2.500" width="240" height="21" fill="#c4ffff" stroke="#000" />
              <text x="76" y="20" fontStyle="italic">Size(Size) / Min</text>
              <text x="9" y="39">7.708</text>
              <text x="68" y="37">7.82</text>
              <rect x="4.500" y="42.500" width="55" height="121" fill="#ffff1e" stroke="#000" />
              <rect x="59.500" y="40.500" width="55" height="123" fill="#ffff1e" stroke="#000" />
              <path d="M0 165h360" stroke="#000" strokeWidth="4" />
              <path d="M4.500 168.500h110v28h-110zM59.500 168.500v28" fill="#ffff1e" stroke="#000" />
              <text x="13" y="183">7.7-</text><text x="22" y="198">7.8</text>
              <text x="68" y="183">7.8-</text><text x="77" y="198">7.9</text>
            </svg>
          </Chart>
          <Scroll h tone="blue" />
          <ResRow>
            <ResList>
              <List $blue role="listbox" $pad={3}>
                <Item $sel $blue role="option">Size</Item>
                <Item role="option">Feature</Item>
              </List>
              <Scroll tone="blue" />
            </ResList>
            <ResPane>
              <label htmlFor="res">Resolution</label>
              <span>0.1</span>
              <Slider id="res" type="range" min={0} max={10} defaultValue={0} />
            </ResPane>
          </ResRow>
        </HistR>
      </HistTop>
      <BoardView>
        <svg width="360" height="164" viewBox="0 0 360 164">
          <path d="M125 22h300v119H125v-3h8v-9h-8V28h12v-3h-12z" fill={C.blue} stroke="#000" strokeWidth="2" />
          <path d="M332 25h-11v4h11M332 47h-12v8h12M332 100h-12v8h12M332 131h-12v9h12" fill={C.green} stroke="#000" strokeWidth="2" />
          <rect x="273" y="79" width="3" height="3" fill="#d81ee8" />
          <rect x="156" y="103" width="3" height="3" fill="#d81ee8" /><rect x="156" y="106" width="2" height="2" />
        </svg>
      </BoardView>
      <Summary><Del tall /><Ref tall /><div>2 measurements for 6 layers</div></Summary>
      <CloseRow2><Btn $grow>Close</Btn></CloseRow2>
    </Win>
  );
}
const CloseRow2 = styled(CloseRow)`border-top: 0; height: 28px;`;

/* ---------- app ---------- */

const menus: [string, string, number][] = [
  ["F", "ile", 42], ["E", "dit", 42], ["A", "ctions", 63], ["", "Options", 65], ["", "Analysis", 70],
  ["", "DFM", 49], ["S", "tep", 45], ["R", "out", 46], ["W", "indows", 66],
];

export default function App() {
  return (
    <Desktop>
      <Global />
      <Main>
        <MainTitle>
          <AppIcon />
          <span>Graphic Editor 9.07b2 (00@HY-HYCAM-PC064 - Windows, pid:11228)</span>
          <WinControls>
            <button aria-label="Minimize"><svg width="11" height="11"><path d="M0 5.500h10" stroke="#000" /></svg></button>
            <button aria-label="Maximize"><svg width="11" height="11"><rect x=".5" y=".5" width="9" height="9" fill="none" stroke="#000" /></svg></button>
            <button aria-label="Close"><CloseX c="#000" /></button>
          </WinControls>
        </MainTitle>
        <MenuBar>
          {menus.map(([u, rest, w]) => <MenuItem key={rest} $w={w}>{u && <u>{u}</u>}{rest}</MenuItem>)}
          <HelpSlot><MenuItem $big>Help</MenuItem></HelpSlot>
          <DateSlot><div>2025</div><div>PM</div></DateSlot>
        </MenuBar>
        <Body>
          <Side>
            <Info>Job : 8g15c077a0</Info>
            <Info>Step: cam</Info>
            <MatrixFrame><MatrixBtn $grow>Job Matrix ...</MatrixBtn></MatrixFrame>
            <LayerPane>
              <LayerFrame>
                <LayerInner>
                  {groups.map((g, i) => (
                    <LayerGroup key={i}>
                      {g.map(([n, bg]) => (
                        <LayerRow key={n} $bg={bg} $on={n === "sig3t"}>
                          <input type="checkbox" id={"layer-" + n} defaultChecked={n === "sig3t"} />
                          <i />
                          <label htmlFor={"layer-" + n}>
                            {n}
                            {n === "sig3t" && <svg width="5" height="5" viewBox="0 0 5 5"><path d="M.5 .5h4v4h-4zM2.500 0v5M0 2.500h5" stroke="#000" fill="none" /></svg>}
                          </label>
                        </LayerRow>
                      ))}
                    </LayerGroup>
                  ))}
                </LayerInner>
              </LayerFrame>
            </LayerPane>
            <Info $amber>Selected : 0</Info>
          </Side>
          <Board />
          <RightPane>
            <ToolArea>
              <Sliver />
              <Tools>
                <Tool $bg={C.blue} aria-label="Coordinates"><svg width="24" height="34"><path d="M0 5h21v22H0M10.500 5v22M0 20.500h21" stroke="#000" fill="none" strokeWidth="1.500" /><text x="12" y="19" fontSize="6">XY</text></svg></Tool>
                <Tool $bg={C.blue} aria-label="Snake"><svg width="24" height="34"><path d="M24 4l-3 5H4v8h15v9H1" stroke="#000" strokeWidth="2" fill="none" /></svg></Tool>
                <Tool $bg={C.blue} aria-label="Query"><svg width="24" height="34"><rect x="-2" y="4" width="23" height="24" fill="none" stroke="#000" strokeWidth="2" /><path d="M8 13q0-4 4-4 5 0 5 4 0 2-4 4v3M13 22v2" stroke="#000" strokeWidth="2.200" fill="none" /></svg></Tool>
                <Tool $bg={C.blue} $edge="#e01010" aria-label="Signals"><svg width="24" height="34"><rect x="12.500" y="1.500" width="10" height="29" fill={C.blue} stroke="#000" /><circle cx="17.500" cy="8" r="4" fill="#f01818" stroke="#000" /><circle cx="17.500" cy="17" r="3" fill="none" stroke="#000" /><circle cx="17.500" cy="25" r="3" fill="none" stroke="#000" /><path d="M8 5v22H1" stroke="#000" strokeWidth="2" fill="none" /><circle cx="8" cy="5" r="2.500" /><circle cx="2" cy="27" r="2.500" /><path d="M1 13h6M3 10v5" stroke="#e01010" /></svg></Tool>
                <Tool $bg="#fff" aria-label="Pad"><svg width="24" height="34"><circle cx="10" cy="17" r="7.500" /><path d="M0 6.500h21v22H0" fill="none" stroke="#000" strokeDasharray="2 1" /></svg></Tool>
                <Tool $bg="#c8c8c8" aria-label="Move"><svg width="24" height="34"><circle cx="18" cy="7" r="5" fill="#f01010" /><circle cx="3" cy="23" r="5" fill="#1010f0" /><path d="M7 18l6-6M10 12h3v3" stroke="#000" fill="none" /></svg></Tool>
                <Tool $bg="#c8c8c8" aria-label="Join"><svg width="24" height="34"><path d="M0 5h7v12H0" stroke="#1010f0" strokeWidth="2" fill="none" /><path d="M24 5H14v9h10" stroke="#e01010" strokeWidth="2" fill="none" /><path d="M10.500 0v30" stroke="#000" /></svg></Tool>
              </Tools>
            </ToolArea>
            <Coords>{'X = 1.107561"\nY = 1.299159"'}</Coords>
          </RightPane>
        </Body>
        <Command>
          <CmdCell $w={33}><CmdBtn aria-label="Measure"><svg width="20" height="20"><path d="M.5 .5h19v19H.5zM4 5l11 10M4 9V5h4M15 11v4h-4" fill="none" stroke="#000" /></svg></CmdBtn></CmdCell>
          <CmdCell $w={32}><CmdBtn aria-label="Angle"><svg width="20" height="20"><path d="M.5 .5h19v19H.5zM15 3L3 15h13M6 3v4h3M12 11l4 3M16 11l-4 3" fill="none" stroke="#000" /></svg></CmdBtn></CmdCell>
          <CmdCell $w={29} $green><CmdBtn aria-label="Grid"><svg width="18" height="18"><path d="M.5 .5h16v16H.5zM3 14V8l4-5h7v11zM3 8.500h11M8.500 3v11" fill="none" stroke="#000" /></svg></CmdBtn></CmdCell>
          <CmdCell $w={49}><label htmlFor="xy">X Y :</label></CmdCell>
          <CmdCell $w={173}><CmdInput id="xy" /></CmdCell>
          <CmdCell $w={32} $green><CmdBtn aria-label="Alert"><svg width="17" height="19"><path d="M.5 .5h16v17H.5z" fill="none" stroke="#000" /><path d="M8.500 3v8M8.500 13v2" stroke="#000" strokeWidth="1.500" /></svg></CmdBtn></CmdCell>
          <CmdText>&lt;M1&gt; - Select first corner</CmdText>
          <UnitCell><Option label="Units" value="Inch" w={70} tone="green" /></UnitCell>
        </Command>
        <Strip><div /></Strip>
      </Main>
      <ResultsViewer />
      <Checklist />
      <Histogram />
    </Desktop>
  );
}
